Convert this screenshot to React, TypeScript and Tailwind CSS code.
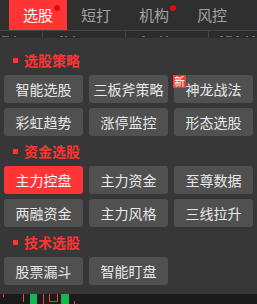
const tabs = [
  { label: '选股', active: true, dot: true },
  { label: '短打', active: false, dot: false },
  { label: '机构', active: false, dot: true },
  { label: '风控', active: false, dot: false },
  { label: '自选', active: false, dot: false },
]

const sections = [
  {
    title: '选股策略',
    items: [
      { label: '智能选股' },
      { label: '三板斧策略' },
      { label: '神龙战法', isNew: true },
      { label: '彩虹趋势' },
      { label: '涨停监控' },
      { label: '形态选股' },
    ],
  },
  {
    title: '资金选股',
    items: [
      { label: '主力控盘', active: true },
      { label: '主力资金' },
      { label: '至尊数据' },
      { label: '两融资金' },
      { label: '主力风格' },
      { label: '三线拉升' },
    ],
  },
  {
    title: '技术选股',
    items: [{ label: '股票漏斗' }, { label: '智能盯盘' }],
  },
]

// faint leftovers of the table header that the panel covers
const marks = [
  [2, 7], [14, 2], [60, 3], [65, 2], [73, 2], [142, 3], [160, 2], [166, 2], [220, 3], [226, 6], [236, 3], [246, 2], [252, 3],
]

const font = "font-['Microsoft_YaHei','Noto_Sans_CJK_SC',sans-serif]"

export default function App() {
  return (
    <div className={`w-[257px] h-[304px] overflow-hidden bg-[#1b1b1b] flex flex-col ${font}`}>
      {/* top tabs */}
      <div className="h-[30px] shrink-0 bg-[#2f2f2f] flex pl-[9px] overflow-hidden">
        {tabs.map((t) => (
          <div
            key={t.label}
            className={`relative w-[58px] shrink-0 flex items-center justify-center text-[15px] ${
              t.active ? 'bg-[#ff3434] text-white' : 'text-[#a3a3a3]'
            }`}
          >
            {t.label}
            {t.dot && (
              <span className="absolute left-[45px] top-[5px] w-[6px] h-[6px] rounded-full bg-[#e30b0b]" />
            )}
          </div>
        ))}
      </div>
      <div className="h-px shrink-0 bg-[#454545]" />

      {/* table header peeking under the panel */}
      <div className="relative h-[7px] shrink-0 bg-[#2c2c2c] flex">
        <div className="w-[43px] border-r border-[#444]" />
        <div className="w-[83px] border-r border-[#444]" />
        <div className="w-[83px] border-r border-[#444]" />
        {marks.map(([x, w]) => (
          <span
            key={x}
            className="absolute bottom-[1px] h-px bg-[#6f6f6f]"
            style={{ left: x, width: w }}
          />
        ))}
      </div>

      {/* menu panel */}
      <div className="h-[256px] shrink-0 bg-[#373737] px-[4px] pt-[7px]">
        {sections.map((s) => (
          <div key={s.title}>
            <div className="h-[30px] flex items-center pl-[9px] gap-[6px]">
              <span className="w-[5px] h-[5px] bg-[#ff3434]" />
              <span className="text-[14px] font-bold text-[#ff3434]">{s.title}</span>
            </div>
            <div className="grid grid-cols-[79px_79px_79px] gap-x-[6px] gap-y-[5px]">
              {s.items.map((it) => (
                <div
                  key={it.label}
                  className={`relative h-[28px] rounded-[3px] flex items-center justify-center text-[14px] ${
                    'active' in it && it.active ? 'bg-[#ff3434] text-white' : 'bg-[#505050] text-[#e8e8e8]'
                  }`}
                >
                  {it.label}
                  {'isNew' in it && it.isNew && (
                    <span className="absolute -left-px top-0 w-[13px] h-[13px] bg-[#ff3434] text-white text-[11px] leading-[13px] text-center">
                      新
                    </span>
                  )}
                </div>
              ))}
            </div>
          </div>
        ))}
      </div>

      {/* chart strip below */}
      <svg width="257" height="10" className="shrink-0">
        <rect x="3" y="0" width="1" height="3" fill="#ff3b3b" />
        <rect x="23" y="0" width="1" height="8" fill="#ff3b3b" />
        <rect x="30" y="0" width="7" height="10" fill="#13b94f" />
        <rect x="43" y="0" width="1" height="10" fill="#ff3b3b" />
        <path d="M49.5 0 V7.5 H57.5 V0" fill="none" stroke="#ff3b3b" strokeWidth="1" />
        <rect x="61" y="0" width="8" height="10" fill="#13b94f" />
        <rect x="74" y="7" width="1" height="3" fill="#ff3b3b" />
      </svg>
    </div>
  )
}
